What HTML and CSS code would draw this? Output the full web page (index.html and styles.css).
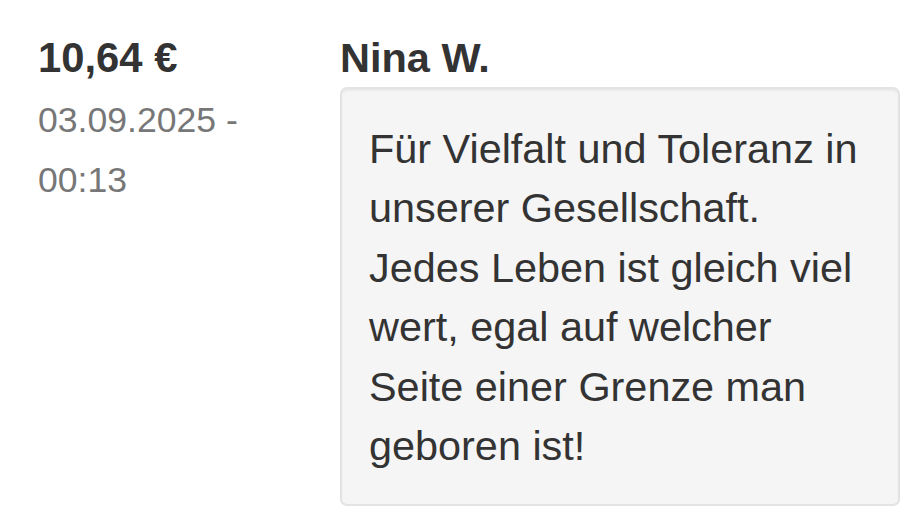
FILE: index.html
```html
<!DOCTYPE html>
<html lang="de">
<head>
<meta charset="utf-8">
<title>Spende</title>
<link rel="stylesheet" href="styles.css">
</head>
<body>
<div class="donation">
  <div class="meta">
    <div class="amount">10,64 €</div>
    <div class="date">03.09.2025 - 00:13</div>
  </div>
  <div class="content">
    <div class="name">Nina W.</div>
    <div class="well">Für Vielfalt und Toleranz in unserer Gesellschaft. Jedes Leben ist gleich viel wert, egal auf welcher Seite einer Grenze man geboren ist!</div>
  </div>
</div>
</body>
</html>
```

FILE: styles.css
```css
html, body {
  margin: 0;
  padding: 0;
  background: #ffffff;
}
body {
  font-family: "Liberation Sans", Arial, Helvetica, sans-serif;
  color: #333333;
}
.donation {
  display: flex;
  padding: 35px 23px 0 38px;
}
.meta {
  width: 302px;
  flex: none;
}
.amount {
  font-weight: bold;
  font-size: 41.8px;
  line-height: 46px;
}
.date {
  margin-top: 9px;
  width: 235px;
  font-size: 35.6px;
  line-height: 60px;
  color: #777777;
}
.content {
  flex: 1;
  min-width: 0;
}
.name {
  font-weight: bold;
  font-size: 41.5px;
  line-height: 46px;
}
.well {
  margin-top: 6px;
  background: #f5f5f5;
  border: 2px solid #e3e3e3;
  border-radius: 7px;
  box-shadow: inset 0 2px 2px rgba(0, 0, 0, 0.05);
  padding: 31px 27px 28px 27px;
  font-size: 41.4px;
  line-height: 59.4px;
}
```
